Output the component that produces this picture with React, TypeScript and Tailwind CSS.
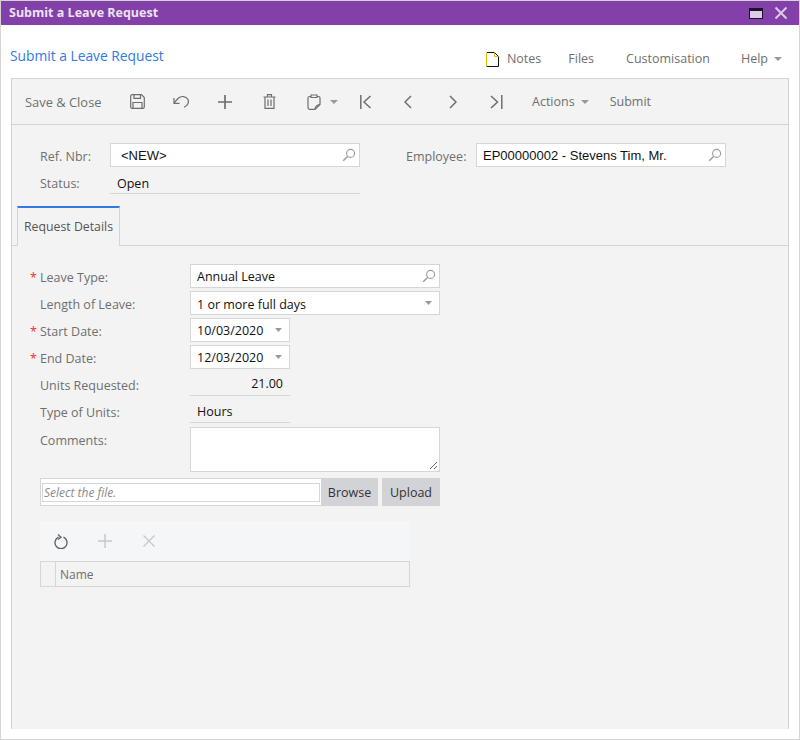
import type { ReactNode } from 'react'

const ui = "font-['Open_Sans',sans-serif]"
const arial = "font-['Liberation_Sans',sans-serif]"

const Caret = ({ className = 'fill-[#9a9a9a]', width = 8 }: { className?: string; width?: number }) => (
  <svg width={width} height="4" viewBox="0 0 8 4" preserveAspectRatio="none" className={className}>
    <path d="M0 0H8L4 4Z" />
  </svg>
)

const Ico = ({ w, h, children, className = '' }: { w: number; h: number; children: ReactNode; className?: string }) => (
  <svg width={w} height={h} viewBox={`0 0 ${w} ${h}`} fill="none" stroke="#6e6e6e" strokeWidth="1.2" className={className}>
    {children}
  </svg>
)

const Search = () => (
  <svg width="14" height="14" viewBox="0 0 14 14" fill="none" stroke="#9a9a9a" strokeWidth="1.1">
    <circle cx="8.6" cy="5.4" r="4" />
    <path d="M5.6 8.4L1.2 12.8" strokeWidth="1.4" />
  </svg>
)

function Label({ text, required, className = 'pt-[4px]' }: { text: string; required?: boolean; className?: string }) {
  return (
    <div className={`flex w-[160px] shrink-0 text-[12.5px] text-[#6f6f6f] ${className}`}>
      <span className="w-[10px] text-[#e33] leading-[18px]">{required ? '*' : ''}</span>
      <span>{text}</span>
    </div>
  )
}

function Field({ width, text, icon, font = ui, size = 'text-[12.5px]', pad = 'pt-[2px]' }: { width: string; text: string; icon?: 'search' | 'caret'; font?: string; size?: string; pad?: string }) {
  return (
    <div className={`flex h-full items-center justify-between border border-[#d6d6d6] bg-white pl-[6px] text-[#111] ${icon === 'search' ? 'pr-[3px]' : 'pr-[7px]'} ${size} ${width} ${font}`}>
      <span className={pad}>{text}</span>
      {icon === 'search' && <Search />}
      {icon === 'caret' && <Caret width={7} />}
    </div>
  )
}

function Row({ label, required, labelPad, children, h, mt }: { label: string; required?: boolean; labelPad?: string; children: ReactNode; h: string; mt: string }) {
  return (
    <div className={`flex items-center pl-[18px] ${h} ${mt}`}>
      <Label text={label} required={required} className={labelPad} />
      {children}
    </div>
  )
}

export default function App() {
  return (
    <div className={`flex h-[740px] w-[800px] flex-col overflow-hidden border border-[#d4d4d4] bg-white ${ui}`}>
      {/* title bar */}
      <div className="flex h-[24px] shrink-0 items-center justify-between bg-[#8240a8] pl-[8px] pr-[11px]">
        <span className="pt-[1px] text-[12.5px] font-bold text-[#ece3f2]">Submit a Leave Request</span>
        <div className="flex items-center gap-[11px]">
          <div className="h-[11px] w-[14px] border border-[#1d1028] border-t-[3px] bg-[#dccbe6]" />
          <svg width="14" height="14" viewBox="0 0 14 14" stroke="#dccbe6" strokeWidth="2">
            <path d="M1.5 1.5L12.5 12.5M12.5 1.5L1.5 12.5" />
          </svg>
        </div>
      </div>

      {/* page header */}
      <div className="flex h-[53px] shrink-0 items-start justify-between pl-[9px] pr-[17px]">
        <span className="mt-[21px] text-[13.8px] leading-[20px] text-[#2f7ae5]">Submit a Leave Request</span>
        <div className="mt-[25px] flex items-center text-[12.5px] leading-[18px] text-[#6f6f6f]">
          <svg width="13" height="15" viewBox="0 0 13 15" fill="none" className="mr-[8px]">
            <path d="M1 .5H8.5L12.5 4.5V14.5H.5" stroke="#111" strokeWidth="1" />
            <path d="M.5 .5V14.5" stroke="#e8b800" strokeWidth="1" />
            <path d="M8.5 .5V4.5H12.5" stroke="#e8b800" strokeWidth="1" />
          </svg>
          <span className="-mt-[1px]">Notes</span>
          <span className="ml-[27px]">Files</span>
          <span className="ml-[32px]">Customisation</span>
          <span className="ml-[31px]">Help</span>
          <Caret className="ml-[6px] fill-[#9a9a9a]" />
        </div>
      </div>

      {/* panel */}
      <div className="ml-[10px] mr-[10px] flex h-[651px] flex-col border-x border-t border-[#d4d4d4] bg-[#f3f3f3]">
        {/* toolbar */}
        <div className="flex h-[46px] shrink-0 items-center border-b border-[#d4d4d4] text-[12.5px] text-[#6f6f6f]">
          <span className="ml-[13px] w-[92px] pt-[2px] text-[12.9px]">Save &amp; Close</span>
          <Ico w={15} h={15} className="ml-[13px]">
            <path d="M2 .7H11.5L14.3 3.5V13C14.3 13.8 13.8 14.3 13 14.3H2C1.2 14.3 .7 13.8 .7 13V2C.7 1.2 1.2 .7 2 .7Z" />
            <path d="M4 .7V4.3H10.5V.7M3 14.3V8.5H12V14.3" />
          </Ico>
          <Ico w={16} h={13} className="ml-[28px]">
            <path d="M1 8L5 3.5C8 .5 13 1 15 4.5C16.3 7.5 14.5 11 11 12.3" />
            <path d="M1 3V8.3H6.5" />
          </Ico>
          <Ico w={14} h={14} className="ml-[29px]">
            <path d="M7 0V14M0 7H14" strokeWidth="1.7" />
          </Ico>
          <Ico w={13} h={15} className="ml-[31px]">
            <path d="M.5 3H12.5M4.5 3V.7H8.5V3M2 3V14.4H11V3M5 5.5V12M8 5.5V12" />
          </Ico>
          <Ico w={14} h={16} className="ml-[31px]">
            <path d="M4 2.5H2.5C1.5 2.5 1 3 1 4V13.5C1 14.5 1.5 15.3 2.5 15.3H8L13 10.5V4C13 3 12.5 2.5 11.5 2.5H10" />
            <path d="M4 1H10V3.5H4Z" />
            <path d="M8 15.2C8.3 12.5 10 10.8 13 10.5" />
          </Ico>
          <Caret className="ml-[9px] fill-[#9a9a9a]" />
          <Ico w={12} h={14} className="ml-[22px]">
            <path d="M.8 0V14M10.5 1L4 7L10.5 13" strokeWidth="1.5" />
          </Ico>
          <Ico w={8} h={14} className="ml-[32px]">
            <path d="M7 1L1 7L7 13" strokeWidth="1.5" />
          </Ico>
          <Ico w={8} h={14} className="ml-[37px]">
            <path d="M1 1L7 7L1 13" strokeWidth="1.5" />
          </Ico>
          <Ico w={13} h={14} className="ml-[33px]">
            <path d="M11.8 0V14M1 1L7.5 7L1 13" strokeWidth="1.5" />
          </Ico>
          <span className="ml-[29px] pt-[2px]">Actions</span>
          <Caret className="ml-[6px] fill-[#9a9a9a]" />
          <span className="ml-[21px] pt-[2px]">Submit</span>
        </div>

        {/* summary form */}
        <div className="mt-[18px] flex h-[24px] shrink-0 items-center">
          <span className="ml-[28px] w-[70px] pt-[4px] text-[12.5px] text-[#6f6f6f]">Ref. Nbr:</span>
          <Field width="w-[250px]" text="&lt;NEW&gt;" icon="search" font={`${arial} pl-[10px]`} size="text-[13px]" />
          <span className="ml-[46px] w-[70px] pt-[4px] text-[12.5px] text-[#6f6f6f]">Employee:</span>
          <Field width="w-[250px]" text="EP00000002 - Stevens Tim, Mr." icon="search" font={arial} size="text-[13px]" />
        </div>
        <div className="flex h-[27px] shrink-0 items-center">
          <span className="ml-[28px] w-[70px] pt-[8px] text-[12.5px] text-[#6f6f6f]">Status:</span>
          <div className="flex h-full w-[250px] items-center border-b border-[#d6d6d6] pl-[7px] pt-[8px] text-[12.5px] text-[#111]">Open</div>
        </div>

        {/* tabs */}
        <div className="mt-[12px] flex h-[40px] shrink-0 border-b border-[#d4d4d4] pl-[5px]">
          <div className="flex h-[40px] w-[103px] items-center justify-center border-x border-t-2 border-[#d4d4d4] border-t-[#2f7ae5] bg-[#f3f3f3] text-[12.3px] text-[#555]">
            Request Details
          </div>
        </div>

        {/* details form */}
        <Row label="Leave Type:" required labelPad="pt-[4px]" h="h-[24px]" mt="mt-[18px]">
          <Field width="w-[250px]" text="Annual Leave" icon="search" />
        </Row>
        <Row label="Length of Leave:" labelPad="pt-[4px]" h="h-[24px]" mt="mt-[3px]">
          <Field width="w-[250px]" text="1 or more full days" icon="caret" pad="pt-[4px]" />
        </Row>
        <Row label="Start Date:" required labelPad="pt-[4px]" h="h-[24px]" mt="mt-[3px]">
          <Field width="w-[100px]" text="10/03/2020" icon="caret" />
        </Row>
        <Row label="End Date:" required labelPad="pt-[4px]" h="h-[24px]" mt="mt-[3px]">
          <Field width="w-[100px]" text="12/03/2020" icon="caret" />
        </Row>
        <Row label="Units Requested:" labelPad="pt-[7px]" h="h-[27px]" mt="mt-0">
          <div className="flex h-full w-[100px] items-center justify-end border-b border-[#d6d6d6] pr-[7px] pt-[5px] text-[12.5px] text-[#111]">21.00</div>
        </Row>
        <Row label="Type of Units:" labelPad="pt-[7px]" h="h-[27px]" mt="mt-0">
          <div className="flex h-full w-[100px] items-center border-b border-[#d6d6d6] pl-[7px] pt-[7px] text-[12.5px] text-[#111]">Hours</div>
        </Row>
        <div className="mt-[4px] flex h-[45px] shrink-0 items-start pl-[18px]">
          <Label text="Comments:" className="pt-[5px]" />
          <div className="flex h-full w-[250px] items-end justify-end border border-[#d6d6d6] bg-white p-[1px]">
            <svg width="9" height="9" viewBox="0 0 9 9" stroke="#666" strokeWidth="1">
              <path d="M1 8L8 1M5 8L8 5" />
            </svg>
          </div>
        </div>

        {/* upload */}
        <div className="ml-[28px] mt-[6px] flex h-[28px] w-[400px] shrink-0">
          <div className="flex w-[281px] items-center border-y border-l border-[#d6d6d6] bg-white pl-[1px]">
            <div className="flex h-[19px] w-[278px] items-center border border-[#d6d6d6] pl-[1px] pt-[1px] text-[12px] italic text-[#8a8a8a]">Select the file.</div>
          </div>
          <div className="flex w-[57px] items-center justify-center bg-[#d2d3d6] pt-[2px] text-[12.5px] text-[#333]">Browse</div>
          <div className="ml-[4px] flex w-[58px] items-center justify-center bg-[#d2d3d6] pt-[2px] text-[12.5px] text-[#333]">Upload</div>
        </div>

        {/* attachments grid */}
        <div className="ml-[28px] mt-[15px] w-[370px] shrink-0">
          <div className="flex h-[40px] items-center bg-[#f5f6f7]">
            <svg width="14" height="15" viewBox="0 0 14 15" fill="none" stroke="#5a6068" strokeWidth="1.3" className="ml-[14px]">
              <path d="M9.5 3.2A6 6 0 1 1 4.5 3.2" />
              <path d="M4 .6L7 3.2L4 5.6" />
            </svg>
            <svg width="14" height="14" viewBox="0 0 14 14" stroke="#c8c8c8" strokeWidth="1.5" className="ml-[30px]">
              <path d="M7 0V14M0 7H14" />
            </svg>
            <svg width="12" height="12" viewBox="0 0 12 12" stroke="#c8c8c8" strokeWidth="1.3" className="ml-[31px]">
              <path d="M.5 .5L11.5 11.5M11.5 .5L.5 11.5" />
            </svg>
          </div>
          <div className="flex h-[26px] border border-[#d6d6d6]">
            <div className="w-[15px] border-r border-[#d6d6d6]" />
            <span className="flex items-center pl-[4px] pt-[2px] text-[12px] text-[#6f6f6f]">Name</span>
          </div>
        </div>
      </div>
    </div>
  )
}
